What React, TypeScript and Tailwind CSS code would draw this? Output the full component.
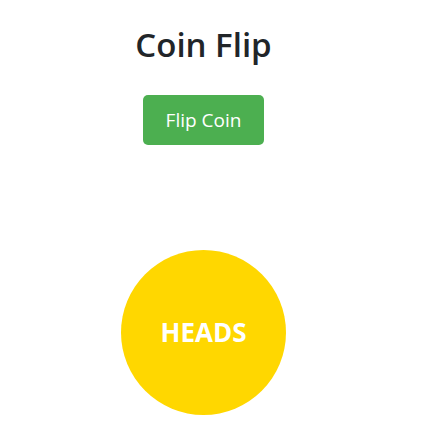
import React, { useState } from 'react';

const App = () => {
  const [side, setSide] = useState<'HEADS' | 'TAILS'>('HEADS');

  const flip = () => {
    setSide(Math.random() < 0.5 ? 'HEADS' : 'TAILS');
  };

  return (
    <div
      className="min-h-screen bg-white w-[407px] flex flex-col items-center"
      style={{ fontFamily: '"Open Sans", "Noto Sans", sans-serif' }}
    >
      <h1 className="text-[33px] leading-[40px] font-semibold text-[#212529] mt-[25px]">Coin Flip</h1>

      <button
        onClick={flip}
        className="mt-[30px] w-[121px] h-[50px] bg-[#4CAF50] text-white text-[19px] rounded-[5px] hover:bg-[#45a049]"
      >
        Flip Coin
      </button>

      <div className="mt-[105px] w-[165px] h-[165px] rounded-full bg-[#FFD700] flex items-center justify-center">
        <span className="text-white text-[26px] font-bold">{side}</span>
      </div>
    </div>
  );
};

export default App;
